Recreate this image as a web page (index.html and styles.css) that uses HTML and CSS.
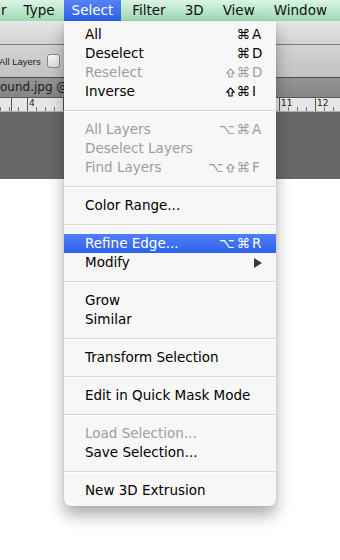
FILE: index.html
```html
<!DOCTYPE html>
<html lang="en">
<head>
    <meta charset="UTF-8">
    <title>Select menu</title>
    <link rel="stylesheet" href="styles.css">
</head>
<body>
<div class="menubar">
    <span class="top first">r</span>
    <span class="top">Type</span>
    <span class="top open">Select</span>
    <span class="top">Filter</span>
    <span class="top">3D</span>
    <span class="top">View</span>
    <span class="top">Window</span>
</div>
<div class="appbar"></div>
<div class="options">
    <span class="optlabel">All Layers</span>
    <span class="check"></span>
</div>
<div class="tabs"><span class="doc">ound.jpg @ 5</span></div>
<div class="ruler">
    <span class="num n4">4</span>
    <span class="num n11">11</span>
    <span class="num n12">12</span>
</div>
<div class="canvas"></div>

<div class="dropdown">
    <div class="item"><span>All</span><span class="sc"><span class="mods">⌘</span><span class="key">A</span></span></div>
    <div class="item"><span>Deselect</span><span class="sc"><span class="mods">⌘</span><span class="key">D</span></span></div>
    <div class="item off"><span>Reselect</span><span class="sc"><span class="mods"><svg class="shift" viewBox="0 0 10 11"><path d="M5 1 L9.2 5.6 H6.8 V10 H3.2 V5.6 H0.8 Z"/></svg>⌘</span><span class="key">D</span></span></div>
    <div class="item"><span>Inverse</span><span class="sc"><span class="mods"><svg class="shift" viewBox="0 0 10 11"><path d="M5 1 L9.2 5.6 H6.8 V10 H3.2 V5.6 H0.8 Z"/></svg>⌘</span><span class="key">I</span></span></div>
    <div class="sep"></div>
    <div class="item off"><span>All Layers</span><span class="sc"><span class="mods">⌥⌘</span><span class="key">A</span></span></div>
    <div class="item off"><span>Deselect Layers</span></div>
    <div class="item off"><span>Find Layers</span><span class="sc"><span class="mods">⌥<svg class="shift" viewBox="0 0 10 11"><path d="M5 1 L9.2 5.6 H6.8 V10 H3.2 V5.6 H0.8 Z"/></svg>⌘</span><span class="key">F</span></span></div>
    <div class="sep"></div>
    <div class="item"><span>Color Range...</span></div>
    <div class="sep"></div>
    <div class="item hl"><span>Refine Edge...</span><span class="sc"><span class="mods">⌥⌘</span><span class="key">R</span></span></div>
    <div class="item"><span>Modify</span><span class="arrow"></span></div>
    <div class="sep"></div>
    <div class="item"><span>Grow</span></div>
    <div class="item"><span>Similar</span></div>
    <div class="sep"></div>
    <div class="item"><span>Transform Selection</span></div>
    <div class="sep"></div>
    <div class="item"><span>Edit in Quick Mask Mode</span></div>
    <div class="sep"></div>
    <div class="item off"><span>Load Selection...</span></div>
    <div class="item"><span>Save Selection...</span></div>
    <div class="sep"></div>
    <div class="item"><span>New 3D Extrusion</span></div>
</div>
</body>
</html>
```

FILE: styles.css
```css
body{
    margin: 0;
    width: 340px;
    height: 560px;
    background: #ffffff;
    font-family: "DejaVu Sans", sans-serif;
    position: relative;
    overflow: hidden;
}
.menubar{
    display: flex;
    height: 21px;
    background: linear-gradient(#dbf5e4, #b4e4c5 60%, #9fd8b3);
    font-size: 13.5px;
    line-height: 21px;
    color: #111;
}
.top{
    padding: 0 9px 0 10px;
    white-space: nowrap;
}
.first{
    margin-left: -9px;
    padding-right: 7px;
}
.open{
    color: #fff;
    background: linear-gradient(#5583f4, #2e60e8);
    padding: 0 8px;
    margin-right: 1px;
}
.appbar{
    height: 23px;
    background: linear-gradient(#e6e6e6, #d3d3d3);
    border-bottom: 1px solid #7c7c7c;
}
.options{
    height: 32px;
    display: flex;
    align-items: center;
    gap: 6px;
    background: linear-gradient(#d2d2d2, #c3c3c3);
    border-bottom: 1px solid #4e4e4e;
    font-family: "Liberation Sans", sans-serif;
    font-size: 9.5px;
    color: #222;
}
.optlabel{
    margin-left: -1px;
}
.check{
    width: 11px;
    height: 12px;
    border: 1px solid #888;
    border-radius: 3px;
    background: linear-gradient(#fbfbfb, #dcdcdc);
}
.tabs{
    height: 19px;
    line-height: 19px;
    background: linear-gradient(#939393, #868686);
    border-bottom: 1px solid #5a5a5a;
    font-size: 12px;
    color: #1c1c1c;
}
.doc{
    display: inline-block;
    max-width: 64px;
    overflow: hidden;
    white-space: nowrap;
    vertical-align: top;
}
.ruler{
    position: relative;
    height: 13px;
    background-color: #e6e6e6;
    background-image:
        repeating-linear-gradient(90deg, #555 0 1px, transparent 1px 36px),
        repeating-linear-gradient(90deg, #777 0 1px, transparent 1px 9px);
    background-size: 100% 13px, 100% 4px;
    background-position: 27px 0, 0 100%;
    background-repeat: repeat-x;
    border-bottom: 1px solid #b0b0b0;
}
.num{
    position: absolute;
    top: 0;
    font-size: 9px;
    line-height: 10px;
    color: #222;
}
.n4{ left: 29px; }
.n11{ left: 281px; }
.n12{ left: 317px; }
.canvas{
    height: 67px;
    background: #686868;
}
.dropdown{
    position: absolute;
    left: 64px;
    top: 21px;
    width: 212px;
    padding: 4px 0 6px;
    background: #f7f7f7;
    border-radius: 0 0 6px 6px;
    box-shadow: 0 9px 16px rgba(0,0,0,0.33), 0 0 1px rgba(0,0,0,0.35);
    font-size: 13.5px;
    color: #000;
}
.item{
    display: flex;
    justify-content: space-between;
    align-items: center;
    height: 19px;
    line-height: 19px;
    padding: 0 13px 0 21px;
}
.off{
    color: #9d9d9d;
}
.hl{
    color: #fff;
    background: linear-gradient(#4f7ff5, #2f62ea);
}
.sc{
    display: flex;
    align-items: center;
}
.mods{
    display: flex;
    align-items: center;
    letter-spacing: 2px;
}
.shift{
    width: 9px;
    height: 10px;
    margin-right: 2px;
    fill: none;
    stroke: currentColor;
    stroke-width: 1.2;
    stroke-linejoin: round;
}
.key{
    width: 11px;
}
.arrow{
    width: 0;
    height: 0;
    border-top: 5px solid transparent;
    border-bottom: 5px solid transparent;
    border-left: 8px solid #3a3a3a;
    margin-right: 1px;
}
.sep{
    height: 19px;
    display: flex;
    align-items: center;
}
.sep::before{
    content: "";
    flex: 1;
    height: 1px;
    background: #dadada;
    box-shadow: 0 1px 0 #fff;
}
```
